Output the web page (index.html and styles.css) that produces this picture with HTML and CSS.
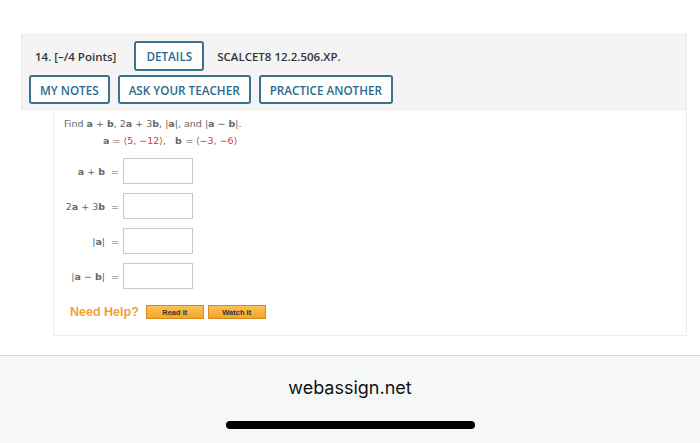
FILE: index.html
```html
<!DOCTYPE html>
<html lang="en">
  <head>
    <meta charset="UTF-8" />
    <title>WebAssign</title>
    <link rel="stylesheet" href="styles.css">
  </head>
  <body>
    <div class="page">
      <div class="q-header">
        <div class="q-row">
          <span class="q-num">14. [&ndash;/4 Points]</span>
          <button class="q-btn details">DETAILS</button>
          <span class="q-code">SCALCET8 12.2.506.XP.</span>
        </div>
        <div class="q-row">
          <button class="q-btn">MY NOTES</button>
          <button class="q-btn">ASK YOUR TEACHER</button>
          <button class="q-btn">PRACTICE ANOTHER</button>
        </div>
      </div>
      <div class="q-body">
        <p class="prompt">Find <b>a</b> + <b>b</b>, 2<b>a</b> + 3<b>b</b>, |<b>a</b>|, and |<b>a</b> &minus; <b>b</b>|.</p>
        <p class="given"><b>a</b> = <span class="red">&#10216;5, &minus;12&#10217;</span>, &nbsp;&nbsp;<b>b</b> = <span class="red">&#10216;&minus;3, &minus;6&#10217;</span></p>
        <div class="answers">
          <div class="ans-row"><label><b>a</b> + <b>b</b> &nbsp;=</label><input type="text"></div>
          <div class="ans-row"><label>2<b>a</b> + 3<b>b</b> &nbsp;=</label><input type="text"></div>
          <div class="ans-row"><label>|<b>a</b>| &nbsp;=</label><input type="text"></div>
          <div class="ans-row"><label>|<b>a</b> &minus; <b>b</b>| &nbsp;=</label><input type="text"></div>
        </div>
        <div class="help">
          <span class="help-label">Need Help?</span>
          <button class="help-btn">Read It</button>
          <button class="help-btn">Watch It</button>
        </div>
      </div>
    </div>
    <div class="footer">
      <div class="url">webassign.net</div>
      <div class="home-bar"></div>
    </div>
  </body>
</html>
```
FILE: styles.css
```css
body {margin: 0;background: #fff;font-family: "Open Sans", sans-serif;}
.page {height: 356px;border-bottom: 1px solid #d4d4d6;padding-top: 34px;box-sizing: border-box;}

/* question header */
.q-header {
  margin-left: 21px;width: 666px;height: 76px;box-sizing: border-box;
  background: #f4f4f4;border: 1px solid #ebebeb;padding: 6px 0 0 7px;
  display: flex;flex-direction: column;gap: 4px;
}
.q-row {display: flex;align-items: center;gap: 8px;}
.q-num {font-size: 11.5px;font-weight: 600;color: #333;margin: 0 10px 0 6px;}
.q-code {font-size: 11.5px;font-weight: 600;color: #333;margin-left: 5px;}
.q-btn {
  font-family: "Open Sans", sans-serif;font-size: 11.7px;font-weight: 600;color: #2a6a8f;
  background: #fff;border: 2px solid #3a7090;border-radius: 3px;height: 29px;padding: 0 9px;
}
.details {height: 30px;padding: 0 10px;}

/* question body */
.q-body {
  margin-left: 53px;width: 634px;height: 226px;box-sizing: border-box;
  border: 1px solid #ececec;border-top: none;padding: 8px 0 0 10px;
  font-family: "DejaVu Sans", Verdana, sans-serif;font-size: 9.5px;color: #666;
}
.q-body p {margin: 0;}
.given {margin: 6px 0 0 39px !important;}
.red {color: #c8443a;}
.answers {margin-top: 12px;display: flex;flex-direction: column;gap: 9px;}
.ans-row {display: flex;align-items: center;gap: 4px;}
.ans-row label {width: 55px;text-align: right;}
.ans-row input {width: 70px;height: 26px;box-sizing: border-box;border: 1px solid #c8c8c8;margin: 0;}

.help {margin-top: 16px;margin-left: 6px;display: flex;align-items: center;gap: 4px;}
.help-label {font-family: "Liberation Sans", Arial, sans-serif;font-size: 12.5px;font-weight: bold;color: #f0a232;margin-right: 3px;}
.help-btn {
  font-family: "Liberation Sans", Arial, sans-serif;font-size: 7.5px;font-weight: bold;color: #333;
  width: 58px;height: 14px;padding: 0;border: 1px solid #d98a1c;
  background: linear-gradient(#fbc15a, #f4a52a);
}

/* browser footer */
.footer {height: 87px;background: #f6f7f8;display: flex;flex-direction: column;align-items: center;}
.url {font-family: "Inter", "Liberation Sans", sans-serif;font-size: 18px;color: #111;margin-top: 21px;}
.home-bar {width: 249px;height: 8px;border-radius: 4px;background: #000;margin-top: 23px;}
```
